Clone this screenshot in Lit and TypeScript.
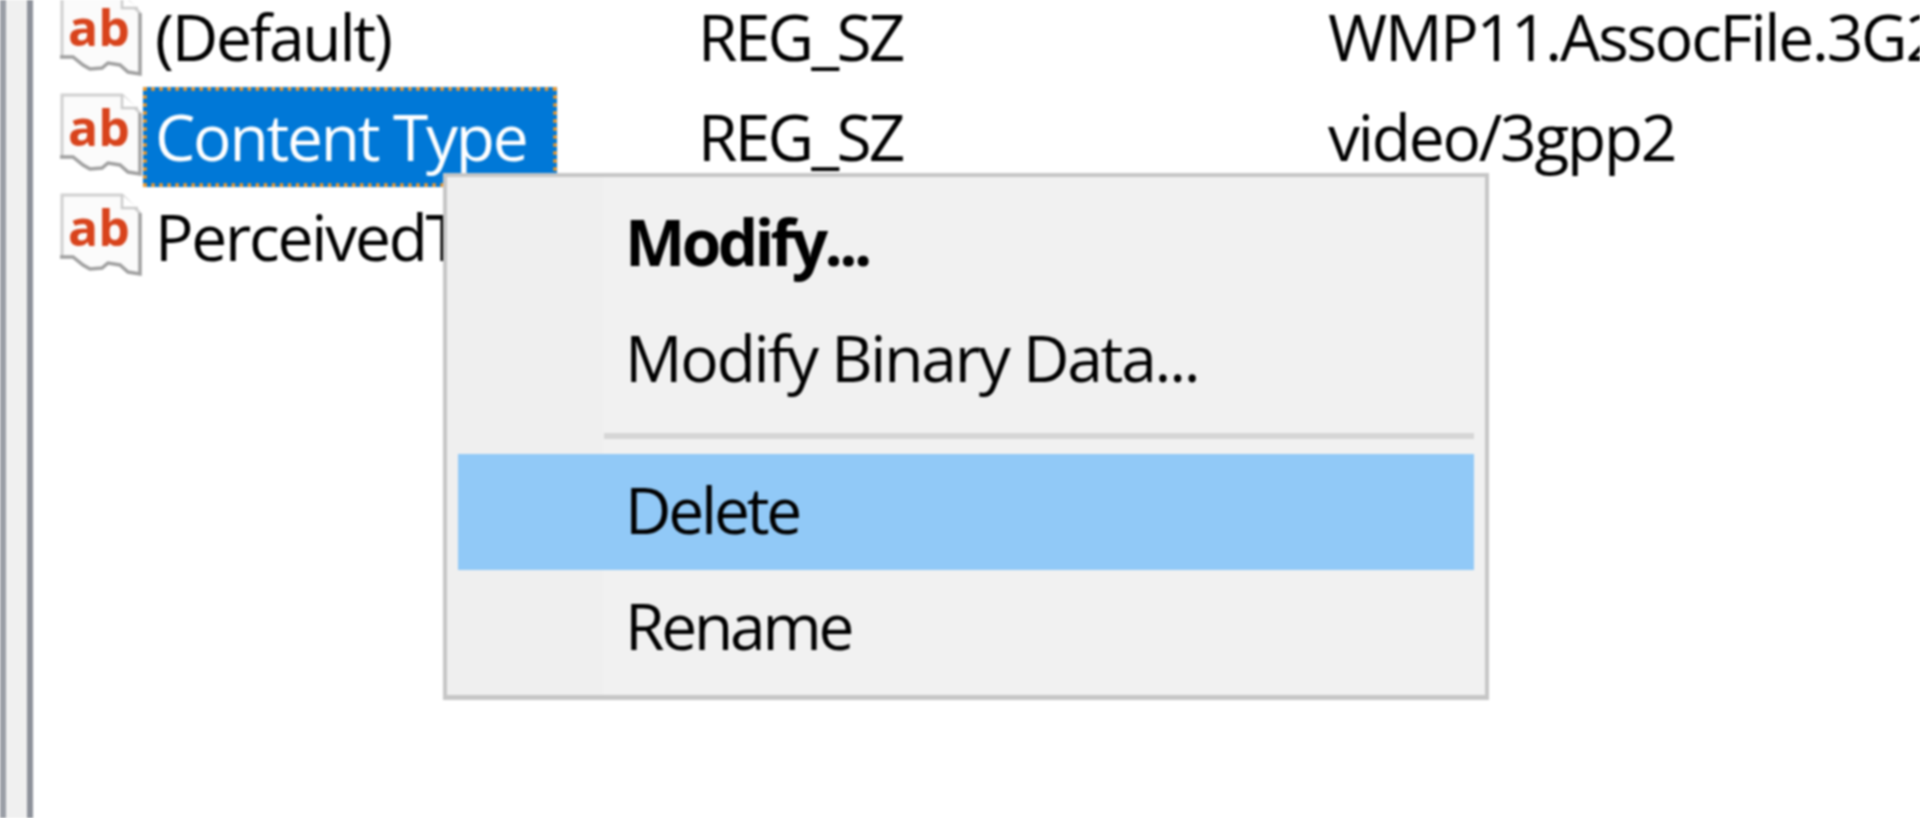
import { LitElement, html, css } from 'lit';
import { customElement } from 'lit/decorators.js';

const VALUES = [
  { name: '(Default)', type: 'REG_SZ', data: 'WMP11.AssocFile.3G2' },
  { name: 'Content Type', type: 'REG_SZ', data: 'video/3gpp2', selected: true },
  { name: 'PerceivedType', type: 'REG_SZ', data: 'video' },
];

const stringIcon = html`
  <svg class="icon" viewBox="0 0 82 84" width="82" height="84">
    <path
      d="M2 2H62L80 20V81L68 79L60 72L48 70L42 75L30 76L23 72L13 64H2Z"
      fill="#fbfbfb"
    />
    <path d="M2 64V2H62L80 20" fill="none" stroke="#d0d0d0" stroke-width="3" />
    <path d="M62 2V15H78" fill="#fff" stroke="#cbcbcb" stroke-width="2.5" />
    <path
      d="M0 64H13L23 72L30 76L42 75L48 70L60 72L68 79L80 81V20"
      fill="none"
      stroke="#a0a0a0"
      stroke-width="3.5"
    />
    <text x="8" y="53" class="ab">ab</text>
  </svg>
`;

@customElement('app-root')
export class AppRoot extends LitElement {
  static styles = css`
    :host {
      display: flex;
      width: 1920px;
      height: 818px;
      overflow: hidden;
      position: relative;
      background: #fff;
      color: #000;
      font-family: 'Open Sans', 'Liberation Sans', sans-serif;
      font-size: 64px;
      filter: blur(0.9px);
    }
    .pane-edge {
      box-sizing: border-box;
      width: 33px;
      flex: none;
      background: #f0f0f0;
      border-left: 6px solid #9a9ea6;
      border-right: 6px solid #8d919a;
    }
    .list {
      flex: 1;
      margin-top: -13px;
      padding-left: 27px;
    }
    .row {
      display: grid;
      grid-template-columns: 83px 555px 630px 1fr;
      height: 100px;
      align-items: center;
      white-space: nowrap;
      letter-spacing: -2.2px;
    }
    .icon {
      display: block;
      margin-bottom: 4px;
    }
    .ab {
      font-family: 'Open Sans', sans-serif;
      font-weight: 700;
      font-size: 50px;
      letter-spacing: 0;
      fill: #d8431c;
    }
    .name {
      justify-self: start;
      box-sizing: border-box;
      height: 100px;
      line-height: 92px;
      padding: 0 26px 0 12px;
      border: 4px solid transparent;
      border-left-width: 0;
    }
    .name.selected {
      background: #0078d7;
      color: #fff;
      border: 4px dotted #ff9a1f;
      padding-left: 8px;
    }
    .cell {
      line-height: 100px;
      height: 100px;
    }
    .cell.type {
      letter-spacing: -2.8px;
    }
    .menu {
      position: absolute;
      left: 443px;
      top: 173px;
      width: 1046px;
      box-sizing: border-box;
      border: 4px solid #c6c6c6;
      border-bottom-width: 5px;
      padding: 9px 0;
      background: linear-gradient(to right, #efefef 156px, #f1f1f1 156px);
      letter-spacing: -2.2px;
    }
    .item {
      height: 116px;
      line-height: 112px;
      margin: 0 11px;
      padding-left: 167px;
      white-space: nowrap;
    }
    .item.default {
      font-weight: 700;
      letter-spacing: -3.6px;
    }
    .item.tight {
      letter-spacing: -3.2px;
    }
    .item.active {
      background: #91c9f7;
    }
    .separator {
      height: 6px;
      margin: 15px 11px 15px 157px;
      background: #d6d6d6;
    }
  `;

  render() {
    return html`
      <div class="pane-edge"></div>
      <div class="list">
        ${VALUES.map(
          (v) => html`
            <div class="row">
              ${stringIcon}
              <div class="name ${v.selected ? 'selected' : ''}">${v.name}</div>
              <div class="cell type">${v.type}</div>
              <div class="cell">${v.data}</div>
            </div>
          `,
        )}
      </div>
      <div class="menu">
        <div class="item default">Modify...</div>
        <div class="item">Modify Binary Data...</div>
        <div class="separator"></div>
        <div class="item active tight">Delete</div>
        <div class="item tight">Rename</div>
      </div>
    `;
  }
}

declare global {
  interface HTMLElementTagNameMap {
    'app-root': AppRoot;
  }
}
